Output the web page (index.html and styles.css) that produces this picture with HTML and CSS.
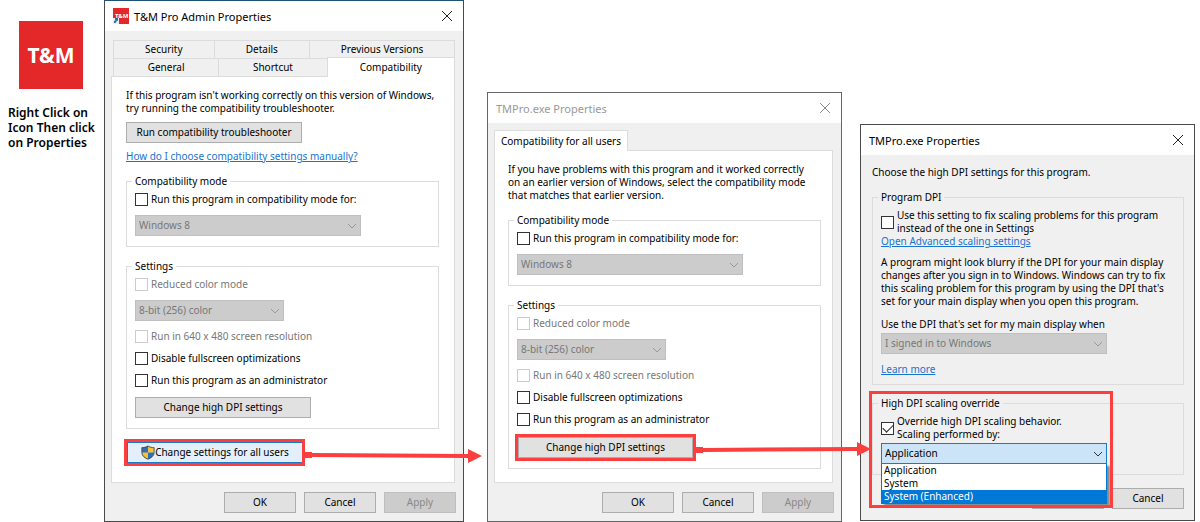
FILE: index.html
```html
<!DOCTYPE html>
<html lang="en">

<head>
  <meta charset="utf-8">
  <title>High DPI settings guide</title>
  <link rel="stylesheet" href="styles.css">
</head>

<body>
  <main class="guide">
    <section class="note">
      <div class="logo">T&amp;M</div>
      <p>Right Click on<br>Icon Then click<br>on Properties</p>
    </section>

    <!-- Step 1: shortcut properties -->
    <section class="window window-admin">
      <header class="titlebar">
        <svg class="app-icon" viewBox="0 0 16 16">
          <rect width="16" height="16" fill="#e42728" />
          <text x="2" y="10" font-size="6" font-weight="700" fill="#fff">T&amp;M</text>
          <rect y="10" width="6" height="6" fill="#e8eef4" />
          <path d="M1 15V13L3 12H2V10H5V13L4 12.500L2.500 15Z" fill="#2c6ca8" />
        </svg>
        <h2>T&amp;M Pro Admin Properties</h2>
        <button class="close" aria-label="Close">
          <svg viewBox="0 0 12 12"><path d="M1 1L11 11M11 1L1 11" /></svg>
        </button>
      </header>
      <div class="tabs">
        <div class="tab-row tab-row-back">
          <button class="tab">Security</button>
          <button class="tab">Details</button>
          <button class="tab">Previous Versions</button>
        </div>
        <div class="tab-row tab-row-front">
          <button class="tab">General</button>
          <button class="tab">Shortcut</button>
          <button class="tab active">Compatibility</button>
        </div>
      </div>
      <div class="panel">
        <p>If this program isn't working correctly on this version of Windows,<br>try running the compatibility troubleshooter.</p>
        <button class="btn btn-wide btn-trouble">Run compatibility troubleshooter</button>
        <a class="help-link" href="#">How do I choose compatibility settings manually?</a>
        <fieldset>
          <legend>Compatibility mode</legend>
          <label class="check"><input type="checkbox"> Run this program in compatibility mode for:</label>
          <div class="select select-wide">
            <select disabled aria-label="Compatibility mode">
              <option>Windows 8</option>
            </select>
            <svg viewBox="0 0 10 6"><path d="M1 1L5 5L9 1" /></svg>
          </div>
        </fieldset>
        <fieldset>
          <legend>Settings</legend>
          <label class="check disabled"><input type="checkbox" disabled> Reduced color mode</label>
          <div class="select select-short">
            <select disabled aria-label="Color mode">
              <option>8-bit (256) color</option>
            </select>
            <svg viewBox="0 0 10 6"><path d="M1 1L5 5L9 1" /></svg>
          </div>
          <label class="check disabled"><input type="checkbox" disabled> Run in 640 x 480 screen resolution</label>
          <label class="check"><input type="checkbox"> Disable fullscreen optimizations</label>
          <label class="check"><input type="checkbox"> Run this program as an administrator</label>
          <button class="btn btn-wide">Change high DPI settings</button>
        </fieldset>
        <div class="callout callout-users">
          <button class="btn btn-focus">
            <svg class="shield" viewBox="0 0 16 16">
              <path d="M8 0C6 2 3 2 1 2V8C1 12 5 15 8 16Z" fill="#2f6fb5" />
              <path d="M8 0C10 2 13 2 15 2V8H8Z" fill="#fbc02d" />
              <path d="M1 8H8V16C5 15 1.500 12 1 8Z" fill="#fbc02d" />
              <path d="M8 8H15C14.500 12 11 15 8 16Z" fill="#2f6fb5" />
              <path d="M8 0.700C10 2 13 2.500 15 2.500V8C15 12 11 14.500 8 15.500C5 14.500 1 12 1 8V2.500C3 2.500 6 2 8 0.700Z" fill="none" stroke="#3f4a50" />
            </svg>Change settings for all users
          </button>
          <svg class="arrow arrow-users" viewBox="0 0 177 14">
            <path d="M0 3H7V4L163 5V0L177 7L163 14V9L7 8V9H0Z" />
          </svg>
        </div>
      </div>
      <footer class="actions">
        <button class="btn">OK</button>
        <button class="btn">Cancel</button>
        <button class="btn" disabled>Apply</button>
      </footer>
    </section>

    <!-- Step 2: properties for all users -->
    <section class="window window-users">
      <header class="titlebar">
        <h2>TMPro.exe Properties</h2>
        <button class="close" aria-label="Close">
          <svg viewBox="0 0 12 12"><path d="M1 1L11 11M11 1L1 11" /></svg>
        </button>
      </header>
      <div class="tabs">
        <button class="tab active">Compatibility for all users</button>
      </div>
      <div class="panel">
        <p>If you have problems with this program and it worked correctly<br>on an earlier version of Windows, select the compatibility mode<br>that matches that earlier version.</p>
        <fieldset>
          <legend>Compatibility mode</legend>
          <label class="check"><input type="checkbox"> Run this program in compatibility mode for:</label>
          <div class="select select-wide">
            <select disabled aria-label="Compatibility mode">
              <option>Windows 8</option>
            </select>
            <svg viewBox="0 0 10 6"><path d="M1 1L5 5L9 1" /></svg>
          </div>
        </fieldset>
        <fieldset>
          <legend>Settings</legend>
          <label class="check disabled"><input type="checkbox" disabled> Reduced color mode</label>
          <div class="select select-short">
            <select disabled aria-label="Color mode">
              <option>8-bit (256) color</option>
            </select>
            <svg viewBox="0 0 10 6"><path d="M1 1L5 5L9 1" /></svg>
          </div>
          <label class="check disabled"><input type="checkbox" disabled> Run in 640 x 480 screen resolution</label>
          <label class="check"><input type="checkbox"> Disable fullscreen optimizations</label>
          <label class="check"><input type="checkbox"> Run this program as an administrator</label>
          <div class="callout callout-dpi">
            <button class="btn">Change high DPI settings</button>
            <svg class="arrow arrow-dpi" viewBox="0 0 177 14">
              <path d="M0 5H7V6L161 5V0L175 7L161 14V9L7 10V11H0Z" />
            </svg>
          </div>
        </fieldset>
      </div>
      <footer class="actions">
        <button class="btn">OK</button>
        <button class="btn">Cancel</button>
        <button class="btn" disabled>Apply</button>
      </footer>
    </section>

    <!-- Step 3: high DPI settings -->
    <section class="window window-dpi">
      <header class="titlebar">
        <h2>TMPro.exe Properties</h2>
        <button class="close" aria-label="Close">
          <svg viewBox="0 0 12 12"><path d="M1 1L11 11M11 1L1 11" /></svg>
        </button>
      </header>
      <div class="content">
        <p>Choose the high DPI settings for this program.</p>
        <fieldset>
          <legend>Program DPI</legend>
          <label class="check check-tall"><input type="checkbox"> <span>Use this setting to fix scaling problems for this program<br>instead of the one in Settings</span></label>
          <a href="#">Open Advanced scaling settings</a>
          <p class="about">A program might look blurry if the DPI for your main display<br>changes after you sign in to Windows. Windows can try to fix<br>this scaling problem for this program by using the DPI that's<br>set for your main display when you open this program.</p>
          <label for="signed-in">Use the DPI that's set for my main display when</label>
          <div class="select select-wide">
            <select id="signed-in" disabled>
              <option>I signed in to Windows</option>
            </select>
            <svg viewBox="0 0 10 6"><path d="M1 1L5 5L9 1" /></svg>
          </div>
          <a class="learn-more" href="#">Learn more</a>
        </fieldset>
        <fieldset class="override">
          <legend>High DPI scaling override</legend>
          <label class="check check-tall"><input type="checkbox" checked> <span>Override high DPI scaling behavior.<br>Scaling performed by:</span></label>
          <div class="select select-wide select-open">
            <select aria-label="Scaling performed by">
              <option>Application</option>
              <option>System</option>
              <option>System (Enhanced)</option>
            </select>
            <svg viewBox="0 0 10 6"><path d="M1 1L5 5L9 1" /></svg>
            <ul class="options">
              <li>Application</li>
              <li>System</li>
              <li class="selected">System (Enhanced)</li>
            </ul>
          </div>
          <div class="override-frame"></div>
        </fieldset>
      </div>
      <footer class="actions">
        <button class="btn" aria-label="OK"></button>
        <button class="btn">Cancel</button>
      </footer>
    </section>
  </main>
</body>

</html>
```
FILE: styles.css
```css
* {
  box-sizing: border-box;
}

body {
  margin: 0;
  background-color: #fff;
  color: #000;
  font-family: "Noto Sans", sans-serif;
  font-size: 10px;
  line-height: 13px;
}

p,
h2,
ul {
  margin: 0;
  padding: 0;
}

a {
  display: block;
  color: #1a73d0;
}

button,
select {
  margin: 0;
  font: inherit;
  color: inherit;
}

.guide {
  display: grid;
  grid-template-columns: 96fr minmax(0, 360fr) minmax(0, 378fr) minmax(0, 353fr);
  align-items: end;
  padding: 0 5px 0 8px;
}

/* Left note */
.note {
  align-self: start;
  padding-top: 21px;
  font-size: 12px;
  font-weight: 600;
  line-height: 15px;
  white-space: nowrap;
}

.logo {
  display: flex;
  align-items: center;
  justify-content: center;
  width: 64px;
  height: 68px;
  margin: 0 0 16px 11px;
  background-color: #e42728;
  color: #fff;
  font-size: 21px;
  font-weight: 700;
}

/* Windows */
.window {
  position: relative;
  border: 1px solid #4a4a4a;
  background-color: #f0f0f0;
  white-space: nowrap;
}

.window-admin {
  z-index: 2;
  border-top-color: #1b5375;
}

.window-users {
  z-index: 1;
  margin-left: 23px;
  border-color: #666;
}

.window-dpi {
  margin-left: 18px;
  margin-bottom: 1px;
}

.titlebar {
  display: flex;
  align-items: center;
  height: 30px;
  padding: 0 10px 0 8px;
  background-color: #fff;
}

.titlebar h2 {
  flex: 1;
  font-size: 11px;
  font-weight: 400;
}

.app-icon {
  width: 16px;
  height: 16px;
  margin-right: 5px;
}

.close {
  width: 12px;
  height: 12px;
  padding: 0;
  border: 0;
  background: none;
}

.close svg {
  display: block;
  fill: none;
  stroke: #222;
}

.window-users .titlebar {
  color: #999;
}

.window-users .close svg {
  stroke: #888;
}

/* Tabs */
.tabs {
  padding: 7px 7px 0 6px;
}

.window-admin .tabs {
  padding: 9px 8px 0;
}

.tab-row {
  display: grid;
}

.tab-row-back {
  grid-template-columns: 100fr 95fr 145fr;
}

.tab-row-front {
  grid-template-columns: 105fr 108fr 128fr;
}

.tab {
  height: 18px;
  padding: 0;
  border: 1px solid #dcdcdc;
  border-width: 1px 0 0 1px;
  background-color: #f0f0f0;
}

.tab-row-back .tab:last-child {
  border-right-width: 1px;
}

.tab.active {
  position: relative;
  height: 20px;
  margin: -1px 0 -1px;
  border-right-width: 1px;
  background-color: #fff;
}

.window-users .tab.active {
  display: block;
  height: 21px;
  margin: 0 0 -1px;
  padding: 0 6px;
}

.panel {
  margin: 0 8px 0 6px;
  padding: 12px 15px 16px 14px;
  border: 1px solid #dcdcdc;
  background-color: #fff;
}

.window-users .panel {
  padding: 12px 11px 13px 13px;
}

/* Groups */
fieldset {
  position: relative;
  min-width: 0;
  margin: 12px 0 0;
  padding: 5px 8px 10px;
  border: 1px solid #dcdcdc;
}

fieldset + fieldset {
  margin-top: 13px;
}

legend {
  margin-left: -3px;
  padding: 0 3px;
}

.check {
  display: flex;
  align-items: center;
  gap: 3px;
  height: 13px;
}

.check-tall {
  height: 26px;
}

.check input {
  display: grid;
  place-items: center;
  width: 13px;
  height: 13px;
  margin: 0;
  appearance: none;
  border: 1px solid #333;
  background-color: #fff;
}

.check input:disabled {
  border-color: #ccc;
}

.check input:checked::after {
  content: "";
  width: 9px;
  height: 5px;
  margin-bottom: 3px;
  border: 1px solid #222;
  border-width: 0 0 1px 1px;
  transform: rotate(-45deg);
}

.disabled {
  color: #777;
}

.select {
  position: relative;
  height: 21px;
}

.select-wide {
  width: 226px;
}

.select-short {
  width: 149px;
}

.select select {
  width: 100%;
  height: 21px;
  padding: 0 20px 0 3px;
  appearance: none;
  border: 1px solid #bfbfbf;
  border-radius: 0;
  background-color: #ccc;
}

.select select:disabled {
  color: #777;
  opacity: 1;
}

.select svg {
  position: absolute;
  top: 8px;
  right: 4px;
  width: 10px;
  height: 6px;
  fill: none;
  stroke: #999;
}

.check + .select,
.select + .check,
.select + .learn-more,
.check + .check {
  margin-top: 9px;
}

.check + .btn {
  margin-top: 10px;
}

/* Buttons */
.btn {
  display: block;
  width: 72px;
  height: 21px;
  padding: 0;
  border: 1px solid #adadad;
  background-color: #e1e1e1;
}

.btn:disabled {
  border-color: #bfbfbf;
  background-color: #ccc;
  color: #888;
}

.btn-wide {
  width: 176px;
}

.btn-trouble,
.help-link {
  margin-top: 7px;
}

.actions {
  display: flex;
  justify-content: flex-end;
  gap: 8px;
  padding: 9px 7px 8px;
}

/* Red marks */
.callout {
  position: relative;
  width: 181px;
  border: 3px solid #fb3f3f;
}

.callout .btn {
  width: 100%;
}

.callout-users {
  margin: 10px 0 0 -2px;
}

.callout-dpi {
  margin: 8px 0 -3px -2px;
}

.callout .btn-focus {
  display: flex;
  align-items: center;
  justify-content: center;
  border: 1px solid #1e78c8;
  border-width: 1px 0 1px 1px;
  background-color: #e3effb;
}

.shield {
  width: 14px;
  height: 15px;
}

.arrow {
  position: absolute;
  z-index: 2;
  left: calc(100% + 3px);
  width: 177px;
  height: 14px;
  fill: #fb3f3f;
}

.arrow-users {
  top: 7px;
}

.arrow-dpi {
  top: 5px;
}

/* High DPI window */
.content {
  padding: 11px 10px 0 11px;
}

.content .about {
  margin: 8px 0 10px;
}

.content label {
  display: block;
}

.content .check {
  display: flex;
}

.content fieldset {
  margin-top: 12px;
  padding-bottom: 8px;
}

.content .override {
  padding-bottom: 10px;
}

.content .select {
  margin-top: 2px;
}

.select-open select {
  border-color: #1e78c8;
  background-color: #cce4f7;
}

.select-open svg {
  stroke: #333;
}

.options {
  position: absolute;
  z-index: 1;
  top: 21px;
  left: 0;
  right: 0;
  border: 1px solid #0078d7;
  border-top: 0;
  background-color: #fff;
  box-shadow: 3px 2px 2px #888;
  list-style: none;
}

.options li {
  padding-left: 2px;
}

.options .selected {
  background-color: #0078d7;
  color: #fff;
}

.override-frame {
  position: absolute;
  z-index: 2;
  top: -19px;
  left: -4px;
  width: 244px;
  height: 117px;
  border: 3px solid #fb3f3f;
  pointer-events: none;
}

.window-dpi .actions {
  padding: 13px 10px 11px;
}
```
